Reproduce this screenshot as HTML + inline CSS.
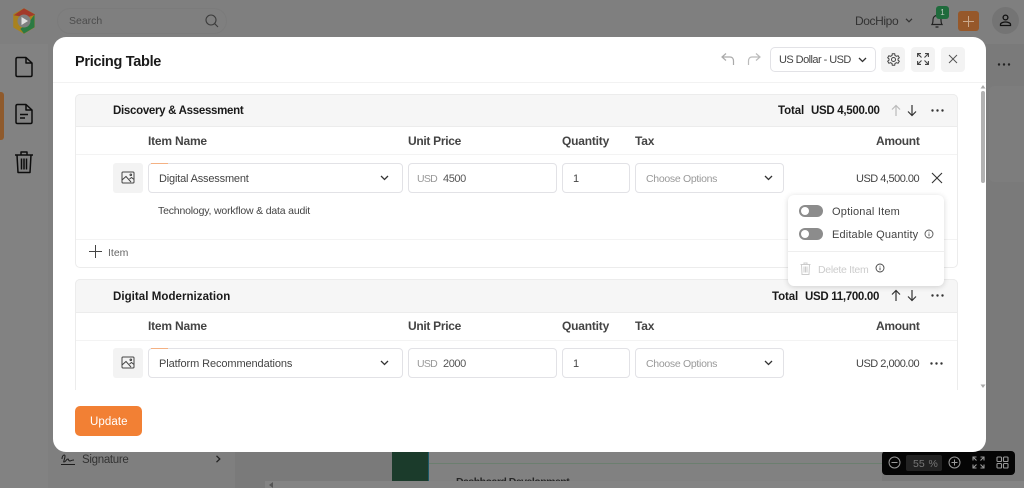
<!DOCTYPE html>
<html><head><meta charset="utf-8">
<style>
html,body{margin:0;padding:0;width:1024px;height:488px;overflow:hidden;background:#7f7f7f}
body{position:relative;font-family:"Liberation Sans",sans-serif;color:#444}
.a{position:absolute}
.t{position:absolute;white-space:nowrap;line-height:16px;height:16px}
.b{font-weight:700;color:#1a1a1a}
.lab{font-weight:700;color:#444;font-size:12px;letter-spacing:-.2px}
.box{position:absolute;box-sizing:border-box;border:1px solid #e2e2e6;border-radius:4px;background:#fff}
.hl{position:absolute;height:1px;background:#efefef}
svg{position:absolute;overflow:visible;fill:none}
</style></head><body>

<!-- background app -->
<div class="a" style="left:0;top:44px;width:48px;height:444px;background:#828282"></div>
<div class="a" style="left:48px;top:44px;width:187px;height:444px;background:#7f7f7f"></div>
<div class="a" style="left:235px;top:44px;width:789px;height:444px;background:#7a7a7a"></div>
<div class="a" style="left:0;top:92px;width:4px;height:48px;background:#8f5a2c;border-radius:0 3px 3px 0"></div>

<!-- logo -->
<svg style="left:12px;top:8px" width="24" height="26" viewBox="0 0 24 26">
<path d="M12 1 L22 6.5 L22 19 L12 25 L2 19 L2 6.5Z" fill="#a8821f" stroke="#a8821f" stroke-linejoin="round" stroke-width="1.5"/>
<path d="M3 7 L12 1 L22 6.5 L15 9 Z" fill="#a33a2a" stroke="#a33a2a"/>
<path d="M22 8 V19 L12 25 L9 21 L17 15Z" fill="#2b7a42" stroke="#2b7a42"/>
<circle cx="12" cy="13" r="6.5" fill="#808080"/>
<path d="M9.5 9 L16 13 L9.5 17Z" fill="#e0e0e0"/>
</svg>

<div class="a" style="left:57px;top:8px;width:170px;height:26px;border-radius:13px;background:#7f7f7f;border:1px solid #7b7b7b;box-sizing:border-box"></div>
<div class="t" style="left:69px;top:13px;font-size:10.5px;color:#4c4c4c">Search</div>
<svg style="left:205px;top:14px" width="14" height="14" viewBox="0 0 14 14" stroke="#3c3c3c" stroke-width="1.1"><circle cx="6" cy="6" r="5"/><path d="M9.7 9.7 L13 13"/></svg>

<div class="t" style="left:855px;top:13px;font-size:12px;color:#333;letter-spacing:-.4px">DocHipo</div>
<svg style="left:905px;top:18px" width="8" height="5" viewBox="0 0 8 5" stroke="#333" stroke-width="1.2"><path d="M1 .8 L4 3.8 L7 .8"/></svg>
<svg style="left:930px;top:13px" width="14" height="16" viewBox="0 0 14 16" stroke="#222" stroke-width="1.2"><path d="M2 11.5 C3 10 3 8 3 6.5 C3 4 5 2.5 7 2.5 C9 2.5 11 4 11 6.5 C11 8 11 10 12 11.5Z M5.5 14 H8.5"/></svg>
<div class="a" style="left:936px;top:6px;width:13px;height:13px;background:#1f6b3c;border-radius:3px;color:#b9c9bd;font-size:8px;line-height:13px;text-align:center">1</div>
<div class="a" style="left:958px;top:11px;width:21px;height:20px;background:#96582a;border-radius:3px"></div>
<svg style="left:963px;top:16px" width="11" height="11" viewBox="0 0 11 11" stroke="#c9a88c" stroke-width="1"><path d="M5.5 0 V11 M0 5.5 H11"/></svg>
<div class="a" style="left:992px;top:7px;width:27px;height:27px;border-radius:50%;background:#747474"></div>
<svg style="left:998px;top:13px" width="15" height="15" viewBox="0 0 15 15" stroke="#111" stroke-width="1.3"><circle cx="7.5" cy="4.5" r="2.4"/><path d="M2.5 12.5 V11.3 C2.5 9.8 5.5 9 7.5 9 C9.5 9 12.5 9.8 12.5 11.3 V12.5Z"/></svg>

<!-- sidebar icons -->
<svg style="left:14px;top:56px" width="20" height="22" viewBox="0 0 20 22" stroke="#0d0d0d" stroke-width="1.5" stroke-linejoin="round"><path d="M2 3 Q2 1.5 3.5 1.5 H12 L18 7 V19 Q18 20.5 16.5 20.5 H3.500 Q2 20.500 2 19Z M12 1.500 V7 H18"/></svg>
<svg style="left:14px;top:103px" width="20" height="22" viewBox="0 0 20 22" stroke="#0d0d0d" stroke-width="1.5" stroke-linejoin="round"><path d="M2 3 Q2 1.500 3.500 1.500 H12 L18 7 V19 Q18 20.500 16.500 20.500 H3.500 Q2 20.500 2 19Z M12 1.500 V7 H18 M6 11.500 H14 M6 15 H11"/></svg>
<svg style="left:14px;top:150px" width="20" height="24" viewBox="0 0 20 24" stroke="#0d0d0d" stroke-width="1.5" stroke-linejoin="round"><path d="M1 5 H19 M7 5 V2 H13 V5 M3 5 L4 22.500 H16 L17 5 M7.500 8.500 V19.500 M10 8.500 V19.500 M12.500 8.500 V19.500"/></svg>

<!-- right bg -->
<div class="a" style="left:989px;top:86px;width:35px;height:96px;background:#7d7d7d;border-radius:5px 0 0 5px"></div>
<svg style="left:997px;top:63px" width="14" height="3"><circle cx="2" cy="1.500" r="1.200" fill="#222"/><circle cx="7" cy="1.500" r="1.200" fill="#222"/><circle cx="12" cy="1.500" r="1.200" fill="#222"/></svg>

<!-- bottom bg -->
<svg style="left:61px;top:452px" width="14" height="14" viewBox="0 0 14 14" stroke="#1c1c1c" stroke-width="1"><path d="M1 7 C1 3 4 2 4 4 C4 7 2 10 3 10 C5 10 5 7 7 7 C8 7 7 9 9 9 C10 9 10 8 13 8 M0 12.500 H14"/></svg>
<div class="t" style="left:82px;top:452px;font-size:11.500px;color:#333;letter-spacing:-.3px">Signature</div>
<svg style="left:215px;top:455px" width="6" height="8" viewBox="0 0 6 8" stroke="#222" stroke-width="1.300"><path d="M1.500 .8 L4.800 4 L1.500 7.200"/></svg>
<div class="a" style="left:265px;top:481px;width:759px;height:7px;background:#848484"></div>
<svg style="left:268px;top:482px" width="6" height="6"><path d="M5 0 L1 3 L5 6Z" fill="#555"/></svg>
<div class="a" style="left:429px;top:452px;width:453px;height:29px;background:#818181"></div>
<div class="a" style="left:392px;top:452px;width:37px;height:29px;background:#1b3b2b;border-right:1px solid #1b5866;box-sizing:border-box"></div>
<div class="a" style="left:429px;top:463px;width:453px;height:1px;background:#6b7f6f"></div>
<div class="a" style="left:429px;top:472px;width:453px;height:9px;overflow:hidden"><div class="t" style="left:27px;top:2px;font-size:10.500px;font-weight:700;color:#262626;letter-spacing:-.5px">Dashboard Development</div></div>

<!-- zoom bar -->
<div class="a" style="left:882px;top:451px;width:133px;height:24px;background:#050505;border-radius:4px"></div>
<div class="a" style="left:906px;top:455px;width:36px;height:16px;background:#222;border-radius:2px"></div>
<div class="t" style="left:913px;top:456px;font-size:10.500px;color:#777;letter-spacing:0;word-spacing:-1px">55&nbsp;&nbsp;%</div>
<svg style="left:888px;top:456px" width="13" height="13" viewBox="0 0 13 13" stroke="#999" stroke-width="1"><circle cx="6.500" cy="6.500" r="5.500"/><path d="M3.500 6.500 H9.500"/></svg>
<svg style="left:948px;top:456px" width="13" height="13" viewBox="0 0 13 13" stroke="#999" stroke-width="1"><circle cx="6.500" cy="6.500" r="5.500"/><path d="M3.500 6.500 H9.500 M6.500 3.500 V9.500"/></svg>
<svg style="left:972px;top:456px" width="13" height="13" viewBox="0 0 13 13" stroke="#999" stroke-width="1.100"><path d="M1 4.500 V1 H4.500 M1 1 L4.500 4.500 M8.500 1 H12 V4.500 M12 1 L8.500 4.500 M1 8.500 V12 H4.500 M1 12 L4.500 8.500 M8.500 12 H12 V8.500 M12 12 L8.500 8.500"/></svg>
<svg style="left:996px;top:456px" width="13" height="13" viewBox="0 0 13 13" stroke="#999" stroke-width="1.100"><rect x="1" y="1" width="4.500" height="4.500" rx=".8"/><rect x="7.500" y="1" width="4.500" height="4.500" rx=".8"/><rect x="1" y="7.500" width="4.500" height="4.500" rx=".8"/><rect x="7.500" y="7.500" width="4.500" height="4.500" rx=".8"/></svg>

<!-- modal -->
<div class="a" style="left:53px;top:37px;width:933px;height:415px;background:#fff;border-radius:13px"></div>
<div class="t b" style="left:75px;top:54px;font-size:14.500px;letter-spacing:-.3px">Pricing Table</div>
<div class="hl" style="left:53px;top:82px;width:933px;background:#f2f2f2"></div>

<svg style="left:721px;top:52px" width="14" height="14" viewBox="0 0 14 14" stroke="#aaa" stroke-width="1.200"><path d="M5 1.500 L1 5 L5 8.500 M1 5 H9 C11.500 5 12.500 7 12.500 9 V13"/></svg>
<svg style="left:747px;top:52px" width="14" height="14" viewBox="0 0 14 14" stroke="#bbb" stroke-width="1.200"><path d="M9 1.500 L13 5 L9 8.500 M13 5 H5 C2.500 5 1.500 7 1.500 9 V13"/></svg>
<div class="box" style="left:770px;top:47px;width:106px;height:25px;border-radius:5px"></div>
<div class="t" style="left:779px;top:52px;font-size:11px;color:#444;letter-spacing:-.55px">US Dollar - USD</div>
<svg style="left:858px;top:57px" width="9" height="6" viewBox="0 0 9 6" stroke="#333" stroke-width="1.300"><path d="M1 1 L4.500 4.500 L8 1"/></svg>
<div class="a" style="left:881px;top:47px;width:24px;height:25px;background:#f3f3f3;border-radius:4px"></div>
<div class="a" style="left:911px;top:47px;width:24px;height:25px;background:#f3f3f3;border-radius:4px"></div>
<div class="a" style="left:941px;top:47px;width:24px;height:25px;background:#f3f3f3;border-radius:4px"></div>
<svg style="left:887px;top:53px" width="13" height="13" viewBox="0 0 13 13" stroke="#444" stroke-width="1"><path d="M5.300 .8 H7.700 L8 2.500 L9.500 3.300 L11.100 2.700 L12.300 4.800 L11 5.900 V7.100 L12.300 8.200 L11.100 10.300 L9.500 9.700 L8 10.500 L7.700 12.200 H5.300 L5 10.500 L3.500 9.700 L1.900 10.300 L.7 8.200 L2 7.100 V5.900 L.7 4.800 L1.900 2.700 L3.500 3.300 L5 2.500Z"/><circle cx="6.500" cy="6.500" r="2"/></svg>
<svg style="left:917px;top:53px" width="12" height="12" viewBox="0 0 12 12" stroke="#444" stroke-width="1.100"><path d="M.6 4 V.6 H4 M.6 .6 L4.500 4.500 M8 .6 H11.400 V4 M11.400 .6 L7.500 4.500 M.6 8 V11.400 H4 M.6 11.400 L4.500 7.500 M8 11.400 H11.400 V8 M11.400 11.400 L7.500 7.500"/></svg>
<svg style="left:948px;top:54px" width="10" height="10" viewBox="0 0 10 10" stroke="#555" stroke-width="1"><path d="M1 1 L9 9 M9 1 L1 9"/></svg>

<!-- scroll region -->
<div class="a" style="left:75px;top:94px;width:883px;height:296px;overflow:hidden">
  <!-- card 1 -->
  <div class="a" style="left:0;top:0;width:883px;height:174px;box-sizing:border-box;border:1px solid #ececec;border-radius:5px"></div>
  <div class="a" style="left:0;top:0;width:883px;height:33px;background:#f6f6f6;border:1px solid #ececec;border-radius:5px 5px 0 0;box-sizing:border-box"></div>
  <div class="hl" style="left:1px;top:60px;width:881px;background:#f3f3f3"></div>
  <div class="hl" style="left:1px;top:145px;width:881px;background:#f3f3f3"></div>
  <!-- card 2 -->
  <div class="a" style="left:0;top:185px;width:883px;height:140px;box-sizing:border-box;border:1px solid #ececec;border-radius:5px"></div>
  <div class="a" style="left:0;top:185px;width:883px;height:34px;background:#f6f6f6;border:1px solid #ececec;border-radius:5px 5px 0 0;box-sizing:border-box"></div>
  <div class="hl" style="left:1px;top:246px;width:881px;background:#f3f3f3"></div>
</div>

<div class="t b" style="left:113px;top:103px;font-size:11.500px;letter-spacing:-.3px">Discovery &amp; Assessment</div>
<div class="t b" style="left:778px;top:103px;font-size:11.500px;letter-spacing:-.1px">Total</div>
<div class="t b" style="left:811px;top:103px;font-size:11.500px;letter-spacing:-.3px">USD 4,500.00</div>
<svg style="left:891px;top:104px" width="10" height="13" viewBox="0 0 10 13" stroke="#bbb" stroke-width="1.200"><path d="M5 12 V1.500 M1 5.500 L5 1.500 L9 5.500"/></svg>
<svg style="left:907px;top:104px" width="10" height="13" viewBox="0 0 10 13" stroke="#333" stroke-width="1.200"><path d="M5 1 V11.500 M1 7.500 L5 11.500 L9 7.500"/></svg>
<svg style="left:931px;top:109px" width="13" height="3"><circle cx="1.500" cy="1.500" r="1.200" fill="#333"/><circle cx="6.500" cy="1.500" r="1.200" fill="#333"/><circle cx="11.500" cy="1.500" r="1.200" fill="#333"/></svg>

<div class="t lab" style="left:148px;top:133px">Item Name</div>
<div class="t lab" style="left:408px;top:133px;letter-spacing:-.3px">Unit Price</div>
<div class="t lab" style="left:562px;top:133px">Quantity</div>
<div class="t lab" style="left:635px;top:133px">Tax</div>
<div class="t lab" style="left:876px;top:133px;letter-spacing:-.3px">Amount</div>

<div class="a" style="left:113px;top:163px;width:30px;height:30px;background:#f3f3f3;border-radius:3px"></div>
<svg style="left:121px;top:171px" width="14" height="13" viewBox="0 0 14 13" stroke="#444" stroke-width="1"><rect x="1" y="1" width="12" height="11" rx="1"/><path d="M1 9 L5 5.500 L10 11 M8.500 8 L10.500 6.500 L13 8.500"/><circle cx="9.800" cy="3.800" r=".8"/></svg>
<div class="box" style="left:148px;top:163px;width:255px;height:30px"></div>
<div class="a" style="left:151px;top:163px;width:17px;height:1px;background:#f4b183"></div>
<div class="t" style="left:159px;top:171px;font-size:11px;color:#444;letter-spacing:-.18px">Digital Assessment</div>
<svg style="left:380px;top:175px" width="9" height="6" viewBox="0 0 9 6" stroke="#333" stroke-width="1.300"><path d="M1 1 L4.500 4.500 L8 1"/></svg>
<div class="box" style="left:408px;top:163px;width:149px;height:30px"></div>
<div class="t" style="left:417px;top:171px;font-size:10.500px;color:#999;letter-spacing:-.7px">USD</div>
<div class="t" style="left:443px;top:171px;font-size:11px;color:#555;letter-spacing:-.4px">4500</div>
<div class="box" style="left:562px;top:163px;width:68px;height:30px"></div>
<div class="t" style="left:573px;top:171px;font-size:11px;color:#444">1</div>
<div class="box" style="left:635px;top:163px;width:149px;height:30px"></div>
<div class="t" style="left:646px;top:171px;font-size:10.500px;color:#999;letter-spacing:-.3px">Choose Options</div>
<svg style="left:764px;top:175px" width="9" height="6" viewBox="0 0 9 6" stroke="#333" stroke-width="1.300"><path d="M1 1 L4.500 4.500 L8 1"/></svg>
<div class="t" style="left:856px;top:171px;font-size:11px;color:#444;letter-spacing:-.5px">USD 4,500.00</div>
<svg style="left:931px;top:172px" width="12" height="12" viewBox="0 0 12 12" stroke="#333" stroke-width="1.100"><path d="M1 1 L11 11 M11 1 L1 11"/></svg>

<div class="t" style="left:158px;top:203px;font-size:10.500px;color:#444;letter-spacing:-.18px">Technology, workflow &amp; data audit</div>
<svg style="left:89px;top:245px" width="13" height="13" viewBox="0 0 13 13" stroke="#444" stroke-width="1"><path d="M6.500 0 V13 M0 6.500 H13"/></svg>
<div class="t" style="left:108px;top:245px;font-size:10.500px;color:#666">Item</div>

<div class="t b" style="left:113px;top:289px;font-size:11.500px;letter-spacing:.05px">Digital Modernization</div>
<div class="t b" style="left:772px;top:289px;font-size:11.500px;letter-spacing:-.1px">Total</div>
<div class="t b" style="left:805px;top:289px;font-size:11.500px;letter-spacing:-.3px">USD 11,700.00</div>
<svg style="left:891px;top:289px" width="10" height="13" viewBox="0 0 10 13" stroke="#333" stroke-width="1.200"><path d="M5 12 V1.500 M1 5.500 L5 1.500 L9 5.500"/></svg>
<svg style="left:907px;top:289px" width="10" height="13" viewBox="0 0 10 13" stroke="#333" stroke-width="1.200"><path d="M5 1 V11.500 M1 7.500 L5 11.500 L9 7.500"/></svg>
<svg style="left:931px;top:294px" width="13" height="3"><circle cx="1.500" cy="1.500" r="1.200" fill="#333"/><circle cx="6.500" cy="1.500" r="1.200" fill="#333"/><circle cx="11.500" cy="1.500" r="1.200" fill="#333"/></svg>

<div class="t lab" style="left:148px;top:318px">Item Name</div>
<div class="t lab" style="left:408px;top:318px;letter-spacing:-.3px">Unit Price</div>
<div class="t lab" style="left:562px;top:318px">Quantity</div>
<div class="t lab" style="left:635px;top:318px">Tax</div>
<div class="t lab" style="left:876px;top:318px;letter-spacing:-.3px">Amount</div>

<div class="a" style="left:113px;top:348px;width:30px;height:30px;background:#f3f3f3;border-radius:3px"></div>
<svg style="left:121px;top:356px" width="14" height="13" viewBox="0 0 14 13" stroke="#444" stroke-width="1"><rect x="1" y="1" width="12" height="11" rx="1"/><path d="M1 9 L5 5.500 L10 11 M8.500 8 L10.500 6.500 L13 8.500"/><circle cx="9.800" cy="3.800" r=".8"/></svg>
<div class="box" style="left:148px;top:348px;width:255px;height:30px"></div>
<div class="a" style="left:151px;top:348px;width:17px;height:1px;background:#f4b183"></div>
<div class="t" style="left:159px;top:356px;font-size:11px;color:#444;letter-spacing:-.1px">Platform Recommendations</div>
<svg style="left:380px;top:360px" width="9" height="6" viewBox="0 0 9 6" stroke="#333" stroke-width="1.300"><path d="M1 1 L4.500 4.500 L8 1"/></svg>
<div class="box" style="left:408px;top:348px;width:149px;height:30px"></div>
<div class="t" style="left:417px;top:356px;font-size:10.500px;color:#999;letter-spacing:-.7px">USD</div>
<div class="t" style="left:443px;top:356px;font-size:11px;color:#555;letter-spacing:-.4px">2000</div>
<div class="box" style="left:562px;top:348px;width:68px;height:30px"></div>
<div class="t" style="left:573px;top:356px;font-size:11px;color:#444">1</div>
<div class="box" style="left:635px;top:348px;width:149px;height:30px"></div>
<div class="t" style="left:646px;top:356px;font-size:10.500px;color:#999;letter-spacing:-.3px">Choose Options</div>
<svg style="left:764px;top:360px" width="9" height="6" viewBox="0 0 9 6" stroke="#333" stroke-width="1.300"><path d="M1 1 L4.500 4.500 L8 1"/></svg>
<div class="t" style="left:856px;top:356px;font-size:11px;color:#444;letter-spacing:-.5px">USD 2,000.00</div>
<svg style="left:930px;top:362px" width="13" height="3"><circle cx="1.500" cy="1.500" r="1.200" fill="#333"/><circle cx="6.500" cy="1.500" r="1.200" fill="#333"/><circle cx="11.500" cy="1.500" r="1.200" fill="#333"/></svg>

<!-- scrollbar -->
<svg style="left:980px;top:84px" width="6" height="5"><path d="M3 1 L5.500 4.500 H.5Z" fill="#aaa"/></svg>
<div class="a" style="left:981px;top:91px;width:4px;height:92px;background:#b2b2b2;border-radius:2px"></div>
<svg style="left:980px;top:384px" width="6" height="5"><path d="M3 4 L5.500 .5 H.5Z" fill="#aaa"/></svg>

<!-- popup -->
<div class="a" style="left:788px;top:195px;width:156px;height:91px;background:#fff;border-radius:6px;box-shadow:0 1px 6px rgba(0,0,0,.16)"></div>
<div class="a" style="left:799px;top:205px;width:24px;height:12px;background:#8c8c8c;border-radius:6px"></div>
<div class="a" style="left:801px;top:207px;width:8px;height:8px;background:#fff;border-radius:50%"></div>
<div class="a" style="left:799px;top:228px;width:24px;height:12px;background:#8c8c8c;border-radius:6px"></div>
<div class="a" style="left:801px;top:230px;width:8px;height:8px;background:#fff;border-radius:50%"></div>
<div class="t" style="left:832px;top:204px;font-size:11px;color:#444;letter-spacing:.2px">Optional Item</div>
<div class="t" style="left:832px;top:227px;font-size:11px;color:#444;letter-spacing:.15px">Editable Quantity</div>
<svg style="left:924px;top:229px" width="10" height="10" viewBox="0 0 10 10" stroke="#555" stroke-width=".9"><circle cx="5" cy="5" r="4"/><path d="M5 4.500 V7.200 M5 2.700 V3.500"/></svg>
<div class="hl" style="left:788px;top:251px;width:156px;background:#eee"></div>
<svg style="left:800px;top:262px" width="11" height="13" viewBox="0 0 11 13" stroke="#ccc" stroke-width="1"><path d="M.5 2.500 H10.500 M4 2.500 V1 H7 V2.500 M1.500 2.500 L2 12.500 H9 L9.500 2.500 M4 4.500 V10.500 M5.500 4.500 V10.500 M7 4.500 V10.500"/></svg>
<div class="t" style="left:818px;top:262px;font-size:10.500px;color:#ccc;letter-spacing:-.3px">Delete Item</div>
<svg style="left:875px;top:263px" width="10" height="10" viewBox="0 0 10 10" stroke="#444" stroke-width=".9"><circle cx="5" cy="5" r="4"/><path d="M5 4.500 V7.200 M5 2.700 V3.500"/></svg>

<!-- update -->
<div class="a" style="left:75px;top:406px;width:67px;height:30px;background:#f28034;border-radius:5px"></div>
<div class="t" style="left:90px;top:414px;font-size:11.500px;color:#fff;letter-spacing:.1px">Update</div>

</body></html>
